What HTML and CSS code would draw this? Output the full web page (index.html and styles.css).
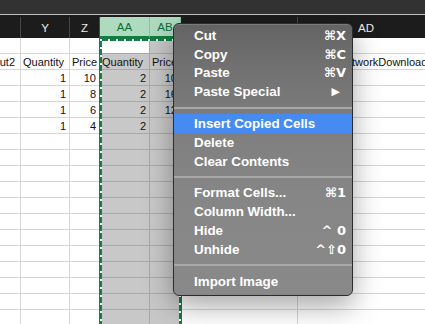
FILE: index.html
```html
<!DOCTYPE html>
<html lang="en">
<head>
    <meta charset="UTF-8">
    <meta name="viewport" content="width=device-width, initial-scale=1.0">
    <title>Sheet - context menu</title>
    <link rel="stylesheet" href="styles.css">
</head>
<body>
    <div class="titlebar"></div>
    <div class="sheet">
        <div class="grid" id="grid">
            <div class="hd"></div>
            <div class="hd">Y</div>
            <div class="hd">Z</div>
            <div class="hd on">AA</div>
            <div class="hd on">AB</div>
            <div class="hd"></div>
            <div class="hd">AD</div>

            <div class="c"></div><div class="c"></div><div class="c"></div><div class="c act"></div><div class="c sel"></div><div class="c"></div><div class="c"></div>

            <div class="c r">Output2</div><div class="c">Quantity</div><div class="c">Price</div><div class="c sel">Quantity</div><div class="c sel">Price</div><div class="c over">NetworkDownloadSpeed</div><div class="c"></div>

            <div class="c"></div><div class="c r">1</div><div class="c r">10</div><div class="c sel r">2</div><div class="c sel r">10</div><div class="c"></div><div class="c"></div>
            <div class="c"></div><div class="c r">1</div><div class="c r">8</div><div class="c sel r">2</div><div class="c sel r">16</div><div class="c"></div><div class="c"></div>
            <div class="c"></div><div class="c r">1</div><div class="c r">6</div><div class="c sel r">2</div><div class="c sel r">12</div><div class="c"></div><div class="c"></div>
            <div class="c"></div><div class="c r">1</div><div class="c r">4</div><div class="c sel r">2</div><div class="c sel"></div><div class="c"></div><div class="c"></div>
        </div>

        <div class="marquee"></div>

        <div class="menu">
            <div class="item"><span>Cut</span><span class="key">⌘X</span></div>
            <div class="item"><span>Copy</span><span class="key">⌘C</span></div>
            <div class="item"><span>Paste</span><span class="key">⌘V</span></div>
            <div class="item"><span>Paste Special</span><span class="key arrow">▶</span></div>
            <div class="sep"></div>
            <div class="item hi"><span>Insert Copied Cells</span></div>
            <div class="item"><span>Delete</span></div>
            <div class="item"><span>Clear Contents</span></div>
            <div class="sep"></div>
            <div class="item"><span>Format Cells...</span><span class="key">⌘1</span></div>
            <div class="item"><span>Column Width...</span></div>
            <div class="item"><span>Hide</span><span class="key">^ 0</span></div>
            <div class="item"><span>Unhide</span><span class="key">^⇧0</span></div>
            <div class="sep"></div>
            <div class="item"><span>Import Image</span></div>
        </div>
    </div>

    <script>
        // empty rows below the data, AA:AB stay in the copied range
        let grid = document.getElementById("grid");
        for (let i = 0; i < 14; i++) {
            for (let col = 0; col < 7; col++) {
                let cell = document.createElement("div");
                cell.className = (col == 3 || col == 4) ? "c sel" : "c";
                grid.appendChild(cell);
            }
        }
    </script>
</body>
</html>
```

FILE: styles.css
```css
body {
    margin: 0;
    width: 425px;
    height: 324px;
    overflow: hidden;
    background: #fff;
    font-family: "Liberation Sans", Arial, sans-serif;
}
.titlebar {
    height: 14px;
    background: #323232;
    border-bottom: 1px solid #bebebe;
}
.sheet {
    position: relative;
    height: 309px;
    padding-top: 2px;
    box-sizing: border-box;
    background: #1c1c1c;
    overflow: hidden;
}
.grid {
    display: grid;
    grid-template-columns: 21px 49px 30px 50px 31px 117px 137px;
    grid-template-rows: 21px;
    grid-auto-rows: 16px;
    width: 435px;
    background: #fff;
    font-size: 11px;
    color: #111;
}
.hd {
    background: #1c1c1c;
    border-right: 1px solid #474747;
    color: #ececec;
    display: flex;
    align-items: center;
    justify-content: center;
    font-size: 11.5px;
}
.hd.on {
    background: #aedbc0;
    color: #0e6c37;
    border-right-color: #86c7a0;
    border-bottom: 2px solid #137d43;
}
.c {
    border-right: 1px solid #d6d6d6;
    border-bottom: 1px solid #d6d6d6;
    display: flex;
    align-items: center;
    padding: 0 2px;
    white-space: nowrap;
    overflow: hidden;
}
.c.r {
    justify-content: flex-end;
    padding-right: 3px;
}
.c.sel {
    background: #c8c8c8;
    border-color: #a9a9a9;
}
.c.act {
    background: #fff;
    border-bottom-color: #a9a9a9;
    border-right-color: #a9a9a9;
}
.c.over {
    overflow: visible;
    border-right-color: transparent;
    padding-left: 157px;
}
.grid > .c:nth-child(15) {
    padding-right: 5px;
}
.marquee {
    position: absolute;
    left: 99px;
    top: 23px;
    width: 83px;
    height: 320px;
    box-sizing: border-box;
    border: 3px solid #137d43;
}
.marquee::before {
    content: "";
    position: absolute;
    inset: -2px;
    background:
        repeating-linear-gradient(to bottom, #fff 0 2px, transparent 2px 8px) left top / 2px 100% no-repeat,
        repeating-linear-gradient(to bottom, #fff 0 2px, transparent 2px 8px) right top / 2px 100% no-repeat,
        repeating-linear-gradient(to right, #fff 0 2px, transparent 2px 8px) left top / 100% 2px no-repeat;
}
.menu {
    position: absolute;
    left: 173px;
    top: 8px;
    width: 180px;
    box-sizing: border-box;
    padding: 2px 0 4px;
    border: 1px solid #2c2c2c;
    border-radius: 6px;
    background: linear-gradient(to bottom, #636363 0, #707070 40px, #7e7e7e 100px, #868686 170px, #898989 100%);
    box-shadow: inset 0 1px 0 rgba(255, 255, 255, 0.15), 0 10px 28px rgba(0, 0, 0, 0.35);
    color: #fff;
    font-size: 13.4px;
    font-weight: bold;
}
.item {
    height: 18.8px;
    display: flex;
    align-items: center;
    justify-content: space-between;
    padding: 0 6px 0 20px;
}
.item.hi {
    background: #468bf2;
}
.key {
    font-family: "DejaVu Sans", "Liberation Sans", sans-serif;
    font-size: 13px;
}
.key.arrow {
    font-size: 11px;
    padding-right: 6px;
}
.sep {
    height: 13px;
    display: flex;
    align-items: center;
}
.sep::before {
    content: "";
    flex: 1;
    height: 2px;
    background: #a8a8a8;
}
```
